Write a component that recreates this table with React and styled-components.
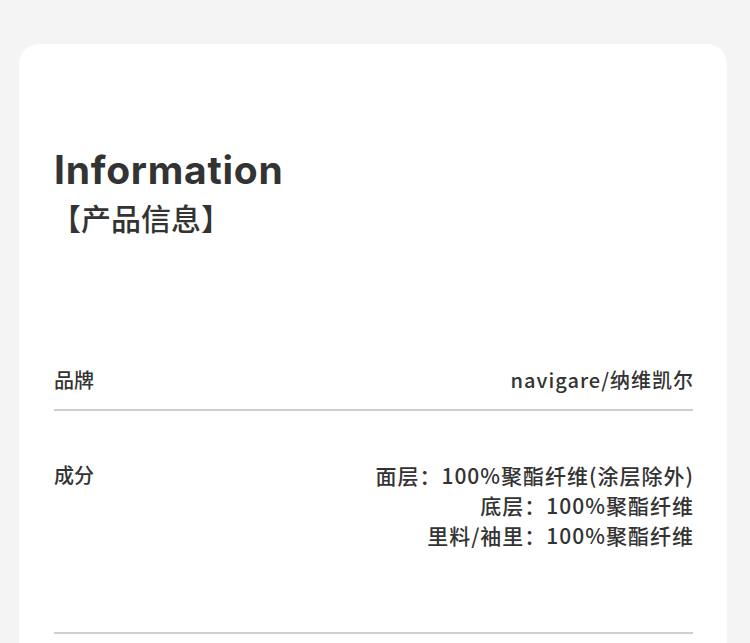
import React from "react";
import styled, { createGlobalStyle } from "styled-components";

const Global = createGlobalStyle`
  html, body { margin: 0; padding: 0; background: #f4f4f4; }
  body { font-family: "Noto Sans CJK SC", "Noto Sans", sans-serif; color: #333; }
`;

const Page = styled.div`
  padding: 44px 23px 0 19px;
  height: 643px;
  box-sizing: border-box;
  overflow: hidden;
`;

const Card = styled.section`
  background: #fff;
  border-radius: 20px 20px 0 0;
  padding: 102px 34px 0 35px;
  min-height: 700px;
`;

const Title = styled.h1`
  margin: 0;
  font-family: Inter, "Noto Sans", sans-serif;
  font-weight: 700;
  font-size: 39px;
  line-height: 48px;
  letter-spacing: 0.75px;
  color: #333;
`;

const Subtitle = styled.h2`
  margin: 0;
  font-family: "Noto Sans CJK SC", sans-serif;
  font-weight: 500;
  font-size: 30px;
  line-height: 46px;
  color: #333;
  margin-left: -3px;
`;

const Table = styled.div`
  margin-top: 125px;
`;

const Row = styled.div`
  display: flex;
  justify-content: space-between;
  align-items: flex-start;
  border-bottom: 2px solid #cfcfcf;
  padding: ${(p) => p.$pad};
`;

const Label = styled.div`
  font-size: 20px;
  font-weight: 500;
  line-height: 30px;
  color: #333;
`;

const Values = styled.div`
  display: flex;
  flex-direction: column;
  align-items: flex-end;
`;

const Value = styled.div`
  font-size: ${(p) => p.$size || 20}px;
  font-weight: 500;
  line-height: 30px;
  letter-spacing: 1px;
  margin-right: -1px;
  color: #333;
  white-space: nowrap;
`;

export default function App() {
  return (
    <>
      <Global />
      <Page>
        <Card>
          <Title>Information</Title>
          <Subtitle>【产品信息】</Subtitle>
          <Table>
            <Row $pad="0 0 14px">
              <Label>品牌</Label>
              <Values>
                <Value>navigare/纳维凯尔</Value>
              </Values>
            </Row>
            <Row $pad="49px 0 82px">
              <Label>成分</Label>
              <Values>
                <Value $size={21}>面层：100%聚酯纤维(涂层除外)</Value>
                <Value $size={21}>底层：100%聚酯纤维</Value>
                <Value $size={21}>里料/袖里：100%聚酯纤维</Value>
              </Values>
            </Row>
          </Table>
        </Card>
      </Page>
    </>
  );
}
